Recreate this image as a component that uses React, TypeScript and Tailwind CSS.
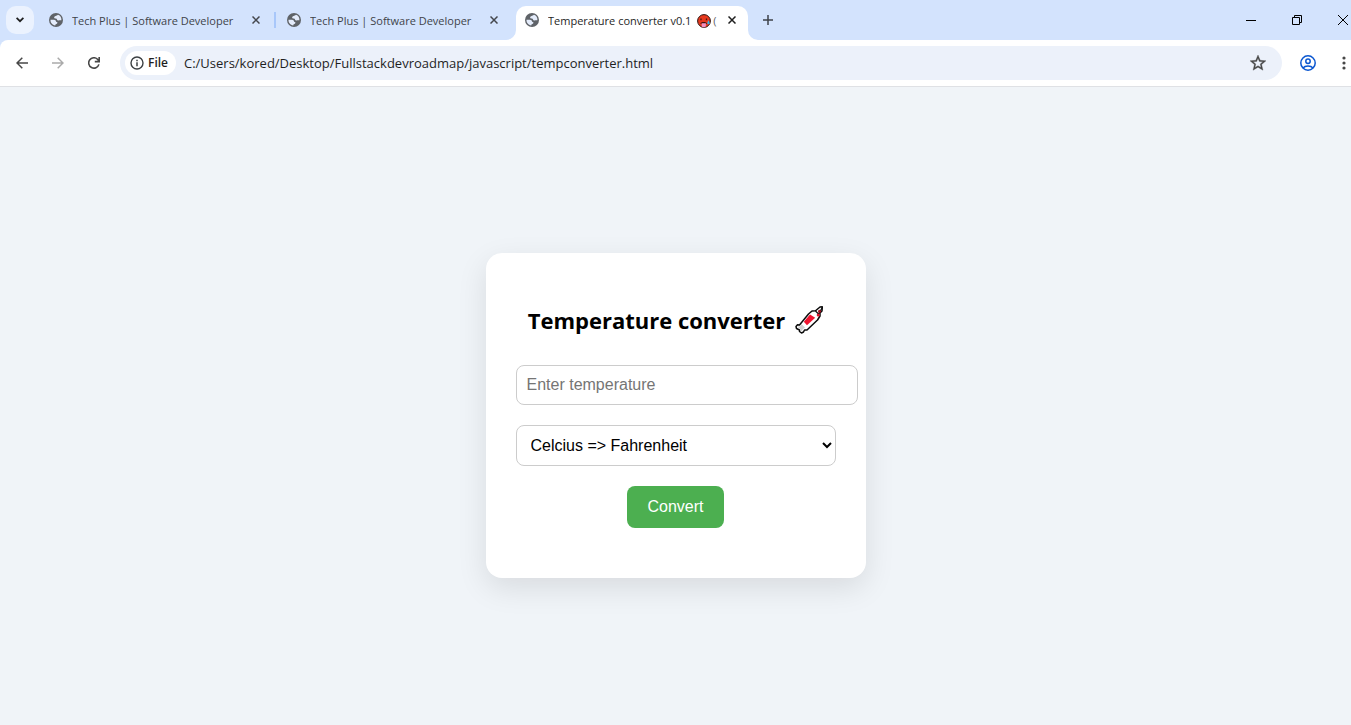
import { useState } from "react";
import type { FormEvent, ReactNode } from "react";

const UI = "font-['Open_Sans','Noto_Sans',sans-serif]";

function GlobeIcon() {
  return (
    <svg viewBox="0 0 14 14" className="size-[14px] shrink-0" aria-hidden="true">
      <circle cx="7" cy="7" r="7" fill="#5f6368" />
      <path
        d="M9 1.700C8.600 2.700 5.800 2.500 5.200 3.900c-.4 1.200.6 1.600 1.700 1.600 1.300 0 .7 1.700 2 1.900 1.200.2 2-.4 3.500-.1C12.700 4.600 11.300 2.600 9 1.700Z M1.500 6.700c1.500-.1 3.800-.2 4.900.5.9.6.2 1.700 1.300 1.900 1.200.2.900 1.500-.3 1.800-.9.300-1 .4-1.100 1.500C3.400 12 1.300 9.800 1.500 6.700Z"
        fill="#e4ecfb"
      />
    </svg>
  );
}

function HotFace() {
  return (
    <svg viewBox="0 0 14 14" className="ml-[6px] size-[14px] shrink-0" role="img" aria-label="Hot face">
      <circle cx="7" cy="7" r="6.4" fill="#e8391d" stroke="#2b1512" strokeWidth="1" />
      <path d="M4 4.500v1.800M9.500 4.500v1.800" stroke="#4a1812" strokeWidth="1.300" />
      <path d="M3.200 9.800C3.600 7.400 9.800 7.400 10.200 9.800Z" fill="#3d1512" />
      <path d="M4.700 9.300h4.200v2.500c0 2-4.200 2-4.200 0Z" fill="#f08fc0" />
      <path d="M11.500 6.300c1.700 2.500 1.500 3.900 0 3.900s-1.700-1.400 0-3.900Z" fill="#35b5e8" />
    </svg>
  );
}

function Syringe() {
  return (
    <svg viewBox="0 0 28 28" className="h-7 w-7 shrink-0" role="img" aria-label="Syringe">
      <path
        d="M1 20.500 2.500 18.800 4.500 19 13.500 8 17 5 20.500 4.800 25 1 27.300.800 27 5 25 7 25 10 22.500 14 12 24 9.500 24 8.500 26 6.500 27 4.500 25.500 4.500 24 1.500 22.500Z"
        fill="#fff"
        stroke="#0b0b0b"
        strokeWidth="1.500"
        strokeLinejoin="round"
      />
      <path d="M2.500 20.500 5 20.500 6.500 18 10 21.500 7.500 23.500 6.500 25.500 5.500 23.500Z" fill="#d0d0d0" />
      <path d="m8.800 15.800 6.200-7.300 5.200 3.300-8.200 7.500Z" fill="#f0142f" />
      <path d="m20.500 5 3 3 3.500-6" fill="none" stroke="#0b0b0b" strokeWidth="1.200" />
      <circle cx="24.500" cy="5.300" r="1.500" fill="#a81020" />
      <circle cx="23.300" cy="9" r="1.600" fill="#d9152b" />
    </svg>
  );
}

function CloseIcon({ color }: { color: string }) {
  return (
    <svg viewBox="0 0 8 8" className="size-2" aria-hidden="true">
      <path d="m.5.500 7 7m0-7-7 7" stroke={color} strokeWidth="1.500" />
    </svg>
  );
}

function IconButton({ label, children }: { label: string; children: ReactNode }) {
  return (
    <button type="button" aria-label={label} className="grid size-7 shrink-0 place-items-center rounded-full">
      {children}
    </button>
  );
}

function InactiveTab({ title }: { title: string }) {
  return (
    <div className="flex w-[238px] items-center pl-[10px]">
      <GlobeIcon />
      <a href="#converter" className="ml-[9px] w-[170px] overflow-hidden whitespace-nowrap pt-px text-[11px] leading-5 text-[#3f434a]">
        {title}
      </a>
      <button type="button" aria-label="Close tab" className="ml-1 grid size-5 place-items-center">
        <CloseIcon color="#44474d" />
      </button>
    </div>
  );
}

function TabStrip() {
  return (
    <header className="flex h-10 bg-[#d3e3fd]">
      <button
        type="button"
        aria-label="Search tabs"
        className="ml-[6px] mt-[6px] grid size-7 shrink-0 place-items-center rounded-[10px] bg-[#ebf2fe]"
      >
        <svg viewBox="0 0 8 6" className="h-[6px] w-2" aria-hidden="true">
          <path d="m.600.800 3.400 3.400L7.400.800" fill="none" stroke="#1f1f1f" strokeWidth="1.700" />
        </svg>
      </button>
      <nav aria-label="Tabs" className="ml-[5px] flex">
        <InactiveTab title="Tech Plus | Software Developer" />
        <div className="relative flex">
          <span className="absolute -left-[3px] top-3 h-4 w-[2px] bg-[#a8c7fa]" />
          <InactiveTab title="Tech Plus | Software Developer" />
        </div>
        <div className="relative ml-px mt-[6px] flex w-[232px] items-center rounded-t-[10px] bg-white pb-[6px] pl-[9px]">
          <svg viewBox="0 0 10 10" className="absolute -left-[10px] bottom-0 size-[10px]" aria-hidden="true">
            <path d="M10 0v10H0A10 10 0 0 0 10 0Z" fill="#fff" />
          </svg>
          <svg viewBox="0 0 10 10" className="absolute -right-[10px] bottom-0 size-[10px]" aria-hidden="true">
            <path d="M0 0v10h10A10 10 0 0 1 0 0Z" fill="#fff" />
          </svg>
          <GlobeIcon />
          <a
            href="#converter"
            aria-current="page"
            className="ml-[9px] flex w-[170px] items-center overflow-hidden whitespace-nowrap pt-px text-[11px] leading-5 text-[#1f1f1f]"
          >
            Temperature converter v0.1
            <HotFace />
            <span className="ml-[2px] text-[#5f6368]">(</span>
          </a>
          <button type="button" aria-label="Close tab" className="ml-1 grid size-5 place-items-center">
            <CloseIcon color="#1f1f1f" />
          </button>
        </div>
      </nav>
      <button type="button" aria-label="New tab" className="ml-[6px] mt-[6px] grid size-7 place-items-center">
        <svg viewBox="0 0 10 10" className="size-[10px]" aria-hidden="true">
          <path d="M5 0v10M0 5h10" stroke="#3f434a" strokeWidth="1.500" />
        </svg>
      </button>
      <div className="ml-auto flex">
        <button type="button" aria-label="Minimize" className="grid w-[46px] place-items-center">
          <svg viewBox="0 0 10 10" className="size-[10px]" aria-hidden="true">
            <path d="M0 5.500h10" stroke="#000" />
          </svg>
        </button>
        <button type="button" aria-label="Restore" className="grid w-[46px] place-items-center">
          <svg viewBox="0 0 10 10" className="size-[10px]" aria-hidden="true">
            <path d="M.5 2.500h7v7h-7zM2.500 2.500v-2h7v7h-2" fill="none" stroke="#000" />
          </svg>
        </button>
        <button type="button" aria-label="Close window" className="flex w-[31px] items-center justify-end pr-[3px]">
          <svg viewBox="0 0 10 10" className="size-[10px]" aria-hidden="true">
            <path d="m0 0 10 10m0-10L0 10" stroke="#000" />
          </svg>
        </button>
      </div>
    </header>
  );
}

function Toolbar() {
  return (
    <div className="bg-[#d3e3fd]">
      <div className="flex h-[47px] items-center rounded-tl-lg border-b border-[#dfe1e5] bg-white pl-2">
        <IconButton label="Back">
          <svg viewBox="0 0 12 12" className="size-3" fill="none" stroke="#474747" strokeWidth="1.500" aria-hidden="true">
            <path d="M12 6H1M6.300.700 1 6l5.300 5.300" />
          </svg>
        </IconButton>
        <div className="ml-2">
          <IconButton label="Forward">
            <svg viewBox="0 0 12 12" className="size-3" fill="none" stroke="#aaa" strokeWidth="1.500" aria-hidden="true">
              <path d="M0 6h11M5.700.700 11 6l-5.300 5.300" />
            </svg>
          </IconButton>
        </div>
        <div className="ml-2">
          <IconButton label="Reload">
            <svg viewBox="0 0 12 12" className="size-3" fill="none" stroke="#474747" strokeWidth="1.600" aria-hidden="true">
              <path d="M10.900 7.400A5.200 5.200 0 1 1 9.800 2.500L11.200 4.400M11.200 0v4.600H6.800" />
            </svg>
          </IconButton>
        </div>
        <div className="ml-3 flex h-[34px] flex-1 items-center rounded-full bg-[#ecf1fa] pl-[5px] pr-[10px]">
          <button
            type="button"
            className="flex h-6 w-[51px] shrink-0 items-center gap-1 rounded-full bg-white pl-[5px] text-[12px] font-semibold text-[#1f1f1f]"
          >
            <svg viewBox="0 0 14 14" className="size-[14px] shrink-0" aria-hidden="true">
              <circle cx="7" cy="7" r="6" fill="none" stroke="#3c4043" strokeWidth="1.400" />
              <path d="M7 6.200v4M7 3.700v1.500" stroke="#3c4043" strokeWidth="1.500" />
            </svg>
            File
          </button>
          <input
            aria-label="Address"
            defaultValue="C:/Users/kored/Desktop/Fullstackdevroadmap/javascript/tempconverter.html"
            className="ml-2 min-w-0 flex-1 bg-transparent pt-px text-[13px] text-[#1f1f1f] outline-none"
          />
          <IconButton label="Bookmark this page">
            <svg viewBox="2 2 20 20" className="size-4" aria-hidden="true">
              <path
                d="m22 9.240-7.190-.620L12 2 9.190 8.630 2 9.240l5.460 4.730L5.820 21 12 17.270 18.180 21l-1.630-7.030L22 9.240zM12 15.400l-3.760 2.270 1-4.280-3.320-2.880 4.380-.380L12 6.100l1.710 4.040 4.380.380-3.320 2.880 1 4.280L12 15.400z"
                fill="#474747"
                stroke="#474747"
                strokeWidth=".4"
              />
            </svg>
          </IconButton>
        </div>
        <div className="ml-3">
          <IconButton label="Profile">
            <svg viewBox="0 0 16 16" className="size-4" fill="none" stroke="#0b57d0" strokeWidth="1.500" aria-hidden="true">
              <circle cx="8" cy="8" r="7.200" />
              <circle cx="8" cy="6.300" r="2.200" />
              <path d="M3 13c2.200-2.800 7.800-2.800 10 0" />
            </svg>
          </IconButton>
        </div>
        <button type="button" aria-label="Menu" className="flex h-7 w-[29px] items-center justify-end pr-[5px]">
          <svg viewBox="0 0 4 14" className="h-[14px] w-1" fill="#474747" aria-hidden="true">
            <circle cx="2" cy="2" r="1.600" />
            <circle cx="2" cy="7" r="1.600" />
            <circle cx="2" cy="12" r="1.600" />
          </svg>
        </button>
      </div>
    </div>
  );
}

function Converter() {
  const [value, setValue] = useState("");
  const [mode, setMode] = useState("cf");
  const [result, setResult] = useState("");

  const convert = (event: FormEvent) => {
    event.preventDefault();
    const n = parseFloat(value);
    if (Number.isNaN(n)) return;
    setResult(mode === "cf" ? `${((n * 9) / 5 + 32).toFixed(1)} °F` : `${(((n - 32) * 5) / 9).toFixed(1)} °C`);
  };

  return (
    <form
      id="converter"
      onSubmit={convert}
      className="flex w-[380px] flex-col items-center rounded-2xl bg-white px-[30px] py-[50px] font-['Liberation_Sans',Arial,sans-serif] shadow-[0_10px_30px_rgba(0,0,0,0.1)]"
    >
      <h1 className="flex items-center gap-[10px] whitespace-nowrap font-['Open_Sans','Noto_Sans',sans-serif] text-[22px] font-bold leading-[34px] text-black">
        Temperature converter
        <Syringe />
      </h1>
      <input
        type="text"
        aria-label="Temperature"
        placeholder="Enter temperature"
        value={value}
        onChange={(e) => setValue(e.target.value)}
        className="mt-7 h-10 w-[342px] self-start rounded-lg border border-[#ccc] px-[10px] text-[16px] placeholder:text-[#757575]"
      />
      <select
        aria-label="Conversion"
        value={mode}
        onChange={(e) => setMode(e.target.value)}
        className="mt-5 h-[41px] w-full rounded-lg border border-[#ccc] bg-white p-[10px] text-[16px] leading-[19px] text-black"
      >
        <option value="cf">Celcius =&gt; Fahrenheit</option>
        <option value="fc">Fahrenheit =&gt; Celcius</option>
      </select>
      <button type="submit" className="mt-5 rounded-lg bg-[#4caf50] px-5 py-3 text-[16px] leading-[18px] text-white">
        Convert
      </button>
      {result && <output className="mt-4 text-[16px]">{result}</output>}
    </form>
  );
}

export default function App() {
  return (
    <div className={`flex min-h-screen flex-col bg-[#f0f4f8] ${UI}`}>
      <TabStrip />
      <Toolbar />
      <main className="flex flex-1 items-center justify-center pt-[19px]">
        <Converter />
      </main>
    </div>
  );
}
